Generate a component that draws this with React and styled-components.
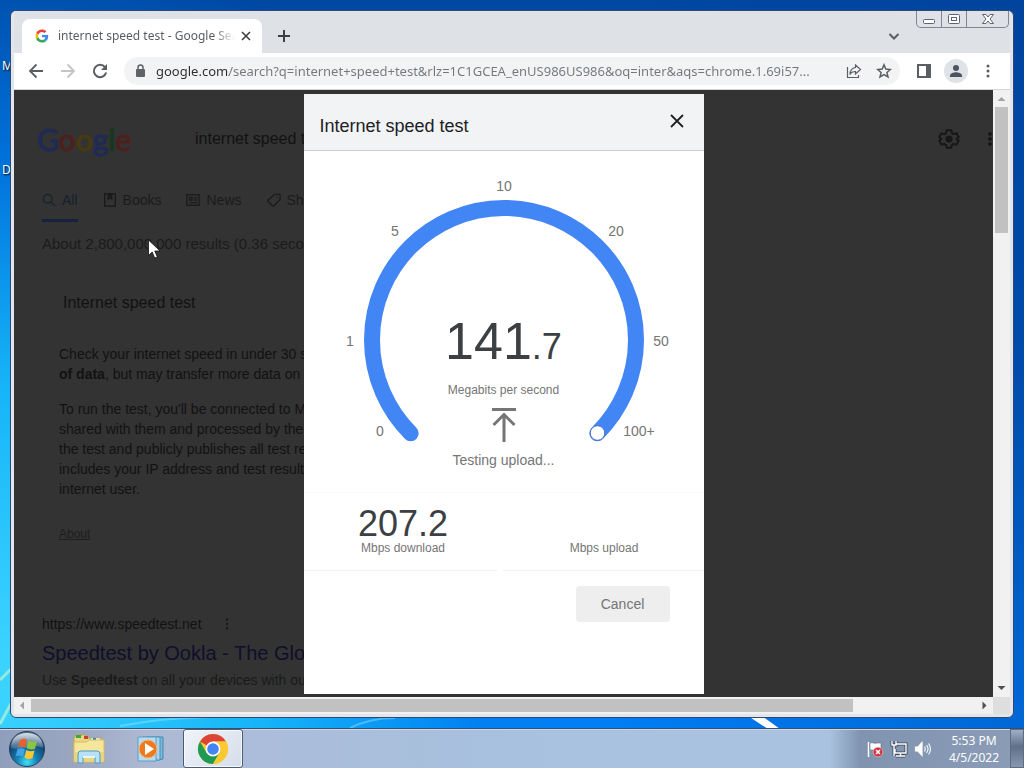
import React from "react";
import styled, { createGlobalStyle } from "styled-components";

const ui = `"Noto Sans", "Open Sans", sans-serif`;
const arial = `"Liberation Sans", Arial, sans-serif`;

const GlobalStyle = createGlobalStyle`
  * { box-sizing: border-box; }
  body { margin: 0; }
  button, input { font: inherit; color: inherit; border: 0; padding: 0; margin: 0; background: none; outline: none; }
  svg { display: block; flex: none; }
  h1, h2, p { margin: 0; font-weight: 400; }
`;

/* ---------- desktop ---------- */

const Desktop = styled.div`
  position: relative;
  display: flex;
  flex-direction: column;
  height: 100vh;
  min-height: 600px;
  overflow: hidden;
  font-family: ${ui};
  background:
    radial-gradient(ellipse 70% 95% at -2% 88%, #3fd6ff 0%, #16b4f8 40%, rgba(0, 130, 240, 0.7) 70%, rgba(0, 80, 180, 0) 100%),
    linear-gradient(90deg, rgba(0, 130, 255, 0) 55%, rgba(0, 60, 150, 0.35) 100%),
    linear-gradient(#0048a2 0%, #0052b4 45%, #0084ff 100%);
`;

const Rays = styled.svg`
  position: absolute;
  inset: 0;
  width: 100%;
  height: 100%;
`;

const DesktopLabel = styled.span`
  position: absolute;
  left: 2px;
  top: ${(p) => p.$top}px;
  font-size: 12px;
  line-height: 16px;
  color: #fff;
  text-shadow: 1px 1px 2px #000;
`;

const Workspace = styled.main`
  position: relative;
  flex: 1;
  min-height: 0;
  display: flex;
  padding: 10px;
`;

const Window = styled.section`
  position: relative;
  flex: 1;
  min-width: 0;
  display: flex;
  flex-direction: column;
  padding: 0 3px 3px;
  border: 1px solid #2c4a78;
  border-radius: 6px;
  background: #e3e5ea;
  overflow: hidden;
`;

/* ---------- browser chrome ---------- */

const TabStrip = styled.header`
  display: flex;
  align-items: flex-end;
  height: 42px;
  padding-left: 8px;
  background: #dee1e6;
`;

const Tab = styled.div`
  display: flex;
  align-items: center;
  width: 240px;
  height: 34px;
  padding: 0 9px 0 13px;
  border-radius: 8px 8px 0 0;
  background: #fff;
`;

const TabTitle = styled.span`
  flex: 1;
  min-width: 0;
  margin: 0 4px 0 9px;
  overflow: hidden;
  white-space: nowrap;
  font-size: 12px;
  line-height: 18px;
  color: #5a5e62;
  mask-image: linear-gradient(90deg, #000 88%, transparent 100%);
`;

const IconButton = styled.button`
  display: flex;
  align-items: center;
  justify-content: center;
  flex: none;
  width: ${(p) => p.$size || 24}px;
  height: ${(p) => p.$size || 24}px;
  color: ${(p) => p.$color || "#5a5e63"};
  border-radius: 50%;
  background: ${(p) => p.$fill || "transparent"};
`;

const NewTab = styled(IconButton)`
  margin: 0 auto 5px 10px;
`;

const TabSearch = styled(IconButton)`
  margin: 0 10px 5px 0;
`;

const WindowControls = styled.div`
  display: flex;
  align-self: flex-start;
  height: 17px;
  margin-right: 1px;
  border: 1px solid #7d8795;
  border-top: 0;
  border-radius: 0 0 5px 5px;
`;

const ControlButton = styled.button`
  display: flex;
  align-items: center;
  justify-content: center;
  width: ${(p) => p.$width}px;
  height: 16px;
  & + & { border-left: 1px solid #7d8795; }
`;

const Toolbar = styled.div`
  display: flex;
  align-items: center;
  gap: 8px;
  height: 37px;
  padding: 0 10px;
  background: #fff;
  border-bottom: 1px solid #d5d5d5;
`;

const Omnibox = styled.label`
  flex: 1;
  min-width: 0;
  display: flex;
  align-items: center;
  gap: 10px;
  height: 28px;
  margin: 0 4px;
  padding: 0 6px 0 10px;
  border-radius: 14px;
  background: #f1f3f4;
`;

const UrlInput = styled.input`
  flex: 1;
  min-width: 0;
  height: 24px;
  font-size: 13px;
  line-height: 24px;
  background: linear-gradient(90deg, #2b2e31 73px, #74787c 73px);
  background-clip: text;
  color: transparent;
`;

/* ---------- page and scroll bars ---------- */

const View = styled.div`
  flex: 1;
  min-height: 0;
  display: grid;
  grid-template-columns: minmax(0, 1fr) 17px;
  grid-template-rows: minmax(0, 1fr) 17px;
  background: #dedede;
`;

const Page = styled.div`
  position: relative;
  overflow: hidden;
  background: #333;
  color: #121212;
  font-family: ${arial};
  font-size: 14px;
  line-height: 20px;
  white-space: nowrap;
`;

const ScrollBar = styled.div`
  display: flex;
  flex-direction: ${(p) => (p.$vertical ? "column" : "row")};
  align-items: center;
  background: #f1f1f1;
`;

const ScrollTrack = styled.div`
  flex: 1;
  align-self: stretch;
  padding: ${(p) => (p.$vertical ? "0 2px" : "2px 0")};
`;

const ScrollThumb = styled.div`
  background: #c1c1c1;
  width: ${(p) => (p.$vertical ? "100%" : "87%")};
  height: ${(p) => (p.$vertical ? "22%" : "100%")};
`;

const SearchHeader = styled.div`
  display: flex;
  align-items: center;
  height: 60px;
  margin-top: 19px;
  padding-left: 23px;
`;

const Logo = styled.div`
  width: 158px;
  font-family: Lato, sans-serif;
  font-size: 30px;
  line-height: 40px;
  -webkit-text-stroke: 1px currentColor;
  span:nth-child(1), span:nth-child(4) { color: #1f2a55; }
  span:nth-child(2), span:nth-child(6) { color: #4e201d; }
  span:nth-child(3) { color: #473a12; }
  span:nth-child(5) { color: #17371f; }
`;

const Query = styled.input`
  flex: 1;
  min-width: 0;
  font-size: 16px;
  line-height: 24px;
`;

const Gear = styled.div`
  margin-right: 27px;
`;

const Nav = styled.nav`
  display: flex;
  gap: 25px;
  height: 33px;
  margin-top: 20px;
  padding-left: 28px;
`;

const NavItem = styled.a`
  display: flex;
  align-items: center;
  gap: 6px;
  padding-bottom: 9px;
  color: ${(p) => (p.$active ? "#16202f" : "#1b1b1b")};
  text-decoration: none;
  border-bottom: 3px solid ${(p) => (p.$active ? "#15233f" : "transparent")};
`;

const ResultCount = styled.p`
  margin-top: 12px;
  padding-left: 28px;
  font-size: 15px;
  color: #1b1b1b;
`;

const Card = styled.article`
  display: flex;
  flex-direction: column;
  gap: 15px;
  margin-top: 39px;
  padding-left: 45px;
`;

const CardTitle = styled.h2`
  margin-bottom: 16px;
  padding-left: 4px;
  font-size: 16px;
  line-height: 20px;
`;

const AboutLink = styled.a`
  margin-top: 10px;
  font-size: 12px;
  color: #1e1e1e;
`;

const Result = styled.article`
  display: flex;
  flex-direction: column;
  margin-top: 70px;
  padding-left: 28px;
`;

const ResultSite = styled.div`
  display: flex;
  align-items: center;
  gap: 22px;
`;

const ResultTitle = styled.a`
  font-size: 20px;
  line-height: 38px;
  color: #0f0f2c;
  text-decoration: none;
`;

const ResultText = styled.p`
  line-height: 16px;
  color: #1a1a1a;
`;

/* ---------- speed test dialog ---------- */

const Overlay = styled.div`
  position: absolute;
  inset: 0;
  display: flex;
  justify-content: center;
  padding: 4px 0 3px;
`;

const Dialog = styled.section`
  display: flex;
  flex-direction: column;
  width: 400px;
  background: #fff;
  color: #757575;
`;

const DialogHeader = styled.header`
  display: flex;
  align-items: center;
  justify-content: space-between;
  height: 57px;
  padding: 8px 15px 0 16px;
  border-bottom: 1px solid #c9cbcd;
  background: #f1f3f4;
`;

const DialogTitle = styled.h1`
  font-size: 18px;
  line-height: 24px;
  color: #202124;
`;

const CloseButton = styled(IconButton)`
  margin-bottom: 10px;
`;

const GaugeArea = styled.div`
  display: grid;
  height: 341px;
  & > * { grid-area: 1 / 1; }
`;

const Gauge = styled.svg`
  text {
    font-size: 14px;
    text-anchor: middle;
    fill: #757575;
  }
`;

const Readout = styled.div`
  display: flex;
  flex-direction: column;
  align-items: center;
  padding-top: 160px;
`;

const Speed = styled.p`
  font-size: 52px;
  line-height: 60px;
  color: #3c4043;
  small { font-size: 36px; }
`;

const Unit = styled.p`
  margin: 3px 0 8px;
  font-size: 12px;
`;

const Status = styled.p`
  margin-top: 8px;
`;

const Totals = styled.div`
  display: grid;
  grid-template-columns: 193px 1fr;
  gap: 6px;
  border-top: 1px solid #fafafa;
`;

const Total = styled.div`
  display: flex;
  flex-direction: column;
  align-items: center;
  justify-content: flex-end;
  height: 78px;
  padding: 0 0 14px ${(p) => p.$inset}px;
  border-bottom: 1px solid #f1f3f4;
`;

const TotalValue = styled.span`
  font-size: 36px;
  line-height: 32px;
  color: #3c4043;
`;

const TotalLabel = styled.span`
  font-size: 12px;
  line-height: 16px;
`;

const CancelButton = styled.button`
  align-self: flex-end;
  width: 94px;
  height: 36px;
  margin: 15px 34px;
  border-radius: 4px;
  background: #eee;
`;

const Cursor = styled.svg`
  position: absolute;
  left: 134px;
  top: 149px;
`;

/* ---------- taskbar ---------- */

const Taskbar = styled.footer`
  position: relative;
  display: flex;
  align-items: stretch;
  height: 40px;
  border-top: 1px solid #38506f;
  box-shadow: inset 0 1px #c9d8ea;
  background: linear-gradient(90deg, #8f9fbb 0, #9aa6c0 7%, #adb9d2 14%, #abbdda 25%, #a7c1de 50%, #a9c2df 81%, #8094b0 84%, #8b9cb6 100%);
`;

const StartButton = styled.button`
  margin: 0 14px 0 9px;
`;

const TaskButton = styled.button`
  display: flex;
  align-items: center;
  justify-content: center;
  width: 60px;
  margin-right: 2px;
  border-radius: 3px;
  border: 1px solid ${(p) => (p.$active ? "#4a5d78" : "transparent")};
  box-shadow: ${(p) => (p.$active ? "inset 0 0 0 1px #f8fafc" : "none")};
  background: ${(p) => (p.$active ? "linear-gradient(135deg, #f0f4f9, #d5dde9)" : "none")};
`;

const Tray = styled.div`
  display: flex;
  align-items: center;
  gap: 6px;
  margin-left: auto;
`;

const Clock = styled.time`
  width: 54px;
  margin: 0 3px 0 9px;
  font-size: 12px;
  line-height: 17px;
  text-align: center;
  color: #fff;
  white-space: nowrap;
`;

const ShowDesktop = styled.button`
  align-self: stretch;
  width: 14px;
  border: 1px solid #5b6c86;
  background: linear-gradient(#9fb0c6, #5f7189 45%, #8797ae);
`;

/* ---------- icons ---------- */

const GoogleG = () => (
  <svg width="14" height="14" viewBox="-2 -2 52 52">
    <path fill="#EA4335" d="M24 9.5c3.5 0 6.7 1.2 9.2 3.6l6.900-6.900C35.900 2.400 30.500 0 24 0 14.600 0 6.500 5.400 2.600 13.200l8 6.200C12.400 13.700 17.700 9.500 24 9.500z" />
    <path fill="#4285F4" d="M47 24.600c0-1.600-.2-3.100-.4-4.600H24v9h12.900c-.6 3-2.300 5.500-4.800 7.200l7.700 6C44.400 38 47 31.800 47 24.600z" />
    <path fill="#FBBC05" d="M10.500 28.600c-.5-1.500-.8-3-.8-4.600s.3-3.100.8-4.600l-8-6.200C.9 16.500 0 20.100 0 24s.9 7.500 2.600 10.800z" />
    <path fill="#34A853" d="M24 48c6.500 0 11.900-2.100 15.800-5.800l-7.700-6c-2.100 1.400-4.900 2.300-8.100 2.300-6.300 0-11.600-4.200-13.500-9.900l-8 6.200C6.500 42.600 14.600 48 24 48z" />
  </svg>
);

const Stroke = ({ size = 16, w = 2, d, box = 16, children }) => (
  <svg width={size} height={size} viewBox={`0 0 ${box} ${box}`} fill="none" stroke="currentColor" strokeWidth={w}>
    {d && <path d={d} />}
    {children}
  </svg>
);

const Dots = ({ r = 1.5, h = 16 }) => (
  <svg width="6" height={h} viewBox="0 0 6 16" fill="currentColor">
    <circle cx="3" cy="3" r={r} />
    <circle cx="3" cy="8" r={r} />
    <circle cx="3" cy="13" r={r} />
  </svg>
);

const Arrow = ({ d, color }) => (
  <svg width="17" height="17" viewBox="0 0 17 17" fill={color}>
    <path d={d} />
  </svg>
);

const StartOrb = () => (
  <svg width="36" height="38" viewBox="0 0 36 38">
    <defs>
      <radialGradient id="orb" cx="50%" cy="88%" r="82%">
        <stop offset="0" stopColor="#3fe0f5" />
        <stop offset=".35" stopColor="#1583b5" />
        <stop offset=".75" stopColor="#134572" />
        <stop offset="1" stopColor="#5b7894" />
      </radialGradient>
      <linearGradient id="gloss" x1="0" y1="0" x2="0" y2="1">
        <stop offset="0" stopColor="#fff" stopOpacity=".75" />
        <stop offset="1" stopColor="#fff" stopOpacity=".15" />
      </linearGradient>
    </defs>
    <circle cx="18" cy="19" r="17.5" fill="url(#orb)" stroke="#24405f" />
    <path d="M2 18C2 8 9 3 18 3s16 5 16 15c-9-5-22 3-32 0z" fill="url(#gloss)" />
    <path d="M11 10c3-1.800 5-1.600 7-.3l-1.800 8c-2.400-1.400-4.600-1.400-7.200-.3z" fill="#e8602c" />
    <path d="M19.300 10.500c3 1.500 5.500 1.500 8.700.2l-2 8c-3 1.200-5.500 1-8.300-.6z" fill="#8cc63f" />
    <path d="M8.500 19c2.600-1.200 5-1 7.300.3L14 26.500c-2.300-1.300-4.700-1.300-7.200-.2z" fill="#41a4e8" />
    <path d="M17.200 20c2.800 1.500 5.400 1.600 8.300.5l-2 7.800c-3 1.200-5.400.8-8.100-.8z" fill="#fdc82f" />
  </svg>
);

const Explorer = () => (
  <svg width="34" height="32" viewBox="0 0 34 32">
    <path d="M2 5l2-3h9l2 3h14l2 2v21H2z" fill="#ead882" stroke="#bfa244" />
    <path d="M4 2h5v3H4z" fill="#3aa648" />
    <path d="M12 3h4v3h-4z" fill="#c4452f" />
    <path d="M19 5h9v3h-9z" fill="#f7fafc" stroke="#8ba6bd" strokeWidth=".5" />
    <path d="M21 5h3v2h-3z" fill="#3f7fc0" />
    <path d="M2 9h12l3-2h15v22H2z" fill="#f5e69c" stroke="#d5bc62" />
    <path d="M3 19h28v9H3z" fill="#ead67c" />
    <path d="M6 30V21q0-3 3-3h16q3 0 3 3v9h-5v-6H11v6z" fill="#b9e1f5" stroke="#4a9bc8" />
    <path d="M11 23h12v2H11z" fill="#e5f5fd" />
  </svg>
);

const MediaPlayer = () => (
  <svg width="30" height="28" viewBox="0 0 30 28">
    <path d="M10 2h17v22l-10 2z" fill="#79b6da" stroke="#4588b2" />
    <path d="M7 2h17v23H7z" fill="#a8d3ea" stroke="#4d92bd" />
    <path d="M2 2h18v24H2z" fill="#b7dcf0" stroke="#5b9fc6" />
    <circle cx="12" cy="14" r="9" fill="#ee7a1f" stroke="#f6b57a" />
    <path d="M9 8l9 6-9 6z" fill="#fff" />
  </svg>
);

const Chrome = () => (
  <svg width="32" height="32" viewBox="0 0 32 32">
    <circle cx="16" cy="16" r="15" fill="#fcc934" />
    <path d="M16 16L3 8.500A15 15 0 0 1 29 8.500H16z" fill="#db4437" />
    <path d="M3 8.500A15 15 0 0 0 16 31l6.500-11.200L16 16 9.500 19.800z" fill="#1e9a52" />
    <path d="M29 8.500A15 15 0 0 1 16 31l6.500-11.300L16 8.500z" fill="#fcc934" />
    <circle cx="16" cy="16" r="7.400" fill="#fff" />
    <circle cx="16" cy="16" r="5.800" fill="#4285f4" />
  </svg>
);

const ticks = [
  ["0", 76, 285], ["1", 46, 195], ["5", 91, 85], ["10", 200, 40],
  ["20", 312, 85], ["50", 357, 195], ["100+", 335, 285],
];

export default function App() {
  return (
    <Desktop>
      <GlobalStyle />
      <Rays viewBox="0 0 1024 768" preserveAspectRatio="none" fill="none">
        <path d="M748 716h14l18 13h-12z" fill="#fff" />
        <path d="M0 680l12-12M0 724l14-26" stroke="#b8f3d8" strokeWidth="3" opacity=".7" />
        <path d="M350 728q20-10 45-10M120 726q40-8 90-9" stroke="#a9ecff" strokeWidth="2" opacity=".4" />
      </Rays>
      <DesktopLabel $top={58}>M</DesktopLabel>
      <DesktopLabel $top={162}>D</DesktopLabel>

      <Workspace>
        <Window>
          <TabStrip>
            <Tab>
              <GoogleG />
              <TabTitle>internet speed test - Google Sear</TabTitle>
              <IconButton $size={14} aria-label="Close tab" $color="#3c4043">
                <Stroke size={10} box={10} w={1.6} d="M1 1l8 8M9 1l-8 8" />
              </IconButton>
            </Tab>
            <NewTab aria-label="New tab" $color="#3c4043">
              <Stroke size={12} box={12} d="M6 0v12M0 6h12" />
            </NewTab>
            <TabSearch aria-label="Search tabs">
              <Stroke size={12} box={12} d="M1.500 4L6 8.500 10.500 4" />
            </TabSearch>
            <WindowControls>
              <ControlButton $width={24} aria-label="Minimize">
                <Stroke size={14} box={14} w={1}><rect x="1.500" y="7.500" width="11" height="4" rx="1" fill="#fff" stroke="#5b6470" /></Stroke>
              </ControlButton>
              <ControlButton $width={25} aria-label="Restore">
                <Stroke size={14} box={14} w={1}>
                  <rect x="1.500" y="2.500" width="11" height="9" rx="1" fill="#fff" stroke="#5b6470" />
                  <rect x="4.500" y="5.500" width="5" height="3" stroke="#5b6470" />
                </Stroke>
              </ControlButton>
              <ControlButton $width={42} aria-label="Close">
                <Stroke size={14} box={14} w={1}>
                  <path d="M1.500 2.500h3.500L7 5l2-2.500h3.500L9 7l3.500 4.500H9L7 9l-2 2.500H1.500L5 7z" fill="#fff" stroke="#5b6470" />
                </Stroke>
              </ControlButton>
            </WindowControls>
          </TabStrip>

          <Toolbar>
            <IconButton aria-label="Back"><Stroke w={1.8} d="M15 8H2M8.500 1.500L2 8l6.500 6.500" /></IconButton>
            <IconButton aria-label="Forward" $color="#c2c4c7"><Stroke w={1.8} d="M1 8h13M7.500 1.500L14 8l-6.500 6.500" /></IconButton>
            <IconButton aria-label="Reload">
              <Stroke>
                <path d="M13 4.200A6.200 6.200 0 1 0 14.100 9.500" />
                <path d="M15 1v6H9z" fill="currentColor" stroke="none" />
              </Stroke>
            </IconButton>
            <Omnibox>
              <svg width="12" height="14" viewBox="0 0 12 14" fill="none">
                <rect x="2" y="5" width="9" height="8" rx="1" fill="#5f6368" />
                <path d="M4 6V3.500a2.500 2.500 0 0 1 5 0V6" stroke="#5f6368" strokeWidth="1.500" />
              </svg>
              <UrlInput
                aria-label="Address"
                defaultValue="google.com/search?q=internet+speed+test&rlz=1C1GCEA_enUS986US986&oq=inter&aqs=chrome.1.69i57..."
              />
              <IconButton $size={20} aria-label="Share">
                <Stroke w={1.2}>
                  <path d="M1.500 4v10.500h11V12" />
                  <path d="M9.500 2l5 4.500-5 4.500V8.500C7 8.500 5 9.500 4 11.500c0-4 2.500-6.500 5.500-7z" />
                </Stroke>
              </IconButton>
              <IconButton $size={20} aria-label="Bookmark">
                <Stroke w={1.500} d="M8 1.800l1.800 4.300 4.600.4-3.500 3 1.100 4.500L8 11.600 4 14l1.100-4.500-3.500-3 4.600-.4z" />
              </IconButton>
            </Omnibox>
            <IconButton aria-label="Side panel">
              <Stroke><rect x="2" y="2" width="12" height="12" /><path d="M10 2h4v12h-4z" fill="currentColor" stroke="none" /></Stroke>
            </IconButton>
            <IconButton aria-label="Profile" $size={24} $fill="#dfe2e7">
              <svg width="14" height="14" viewBox="0 0 14 14" fill="#4b5461">
                <circle cx="7" cy="4" r="3" />
                <path d="M1 13v-1.500C1 9 5 8.200 7 8.200s6 .8 6 3.300V13z" />
              </svg>
            </IconButton>
            <IconButton aria-label="Menu"><Dots /></IconButton>
          </Toolbar>

          <View>
            <Page>
              <SearchHeader>
                <Logo aria-label="Google">
                  <span>G</span><span>o</span><span>o</span><span>g</span><span>l</span><span>e</span>
                </Logo>
                <Query aria-label="Search" defaultValue="internet speed t" />
                <Gear>
                  <svg width="22" height="22" viewBox="0 0 24 24" fill="none" stroke="#171717" strokeWidth="2.200">
                    <path d="M9.500 2.500h5l.7 3 2 1.200 3-1 2.400 4.300-2.300 2 2.300 2-2.400 4.300-3-1-2 1.200-.7 3h-5l-.7-3-2-1.200-3 1L1.400 14l2.300-2-2.300-2 2.400-4.300 3 1 2-1.200z" strokeLinejoin="round" />
                    <circle cx="12" cy="12" r="2.800" fill="#171717" />
                  </svg>
                </Gear>
                <Dots r={1.8} h={18} />
              </SearchHeader>

              <Nav>
                <NavItem href="#all" $active>
                  <Stroke size={14} w={1.3}><circle cx="6.500" cy="6.500" r="5" /><path d="M10 10l5 5" /></Stroke>
                  All
                </NavItem>
                <NavItem href="#books">
                  <Stroke size={14} w={1.600}><rect x="2" y="1" width="12" height="14" /><path d="M6 1h4v6L8 5.500 6 7z" fill="currentColor" /></Stroke>
                  Books
                </NavItem>
                <NavItem href="#news">
                  <Stroke size={14} w={1.500}><rect x="1" y="2" width="14" height="12" /><path d="M4 5h3v3H4zM9 5.500h4M9 8h4M4 11h9" /></Stroke>
                  News
                </NavItem>
                <NavItem href="#shopping">
                  <Stroke size={14} w={1.500} d="M8.500 1.500H14a1 1 0 0 1 1 1v4.500L8 14.500a1.500 1.500 0 0 1-2 0L1.500 10a1.500 1.500 0 0 1 0-2zM11.500 4v1.500" />
                  Sho
                </NavItem>
              </Nav>
              <ResultCount>About 2,800,000,000 results (0.36 secon</ResultCount>

              <Card>
                <CardTitle>Internet speed test</CardTitle>
                <p>Check your internet speed in under 30 s<br /><b>of data</b>, but may transfer more data on f</p>
                <p>
                  To run the test, you'll be connected to M<br />
                  shared with them and processed by the<br />
                  the test and publicly publishes all test re<br />
                  includes your IP address and test result<br />
                  internet user.
                </p>
                <AboutLink href="#about">About</AboutLink>
              </Card>

              <Result>
                <ResultSite>https://www.speedtest.net <Dots r={1.2} h={14} /></ResultSite>
                <ResultTitle href="#speedtest">Speedtest by Ookla - The Glo</ResultTitle>
                <ResultText>Use <b>Speedtest</b> on all your devices with ou</ResultText>
              </Result>

              <Overlay>
                <Dialog role="dialog" aria-labelledby="speed-title">
                  <DialogHeader>
                    <DialogTitle id="speed-title">Internet speed test</DialogTitle>
                    <CloseButton aria-label="Close dialog" $color="#202124">
                      <Stroke size={14} box={14} w={1.800} d="M1 1l12 12M13 1L1 13" />
                    </CloseButton>
                  </DialogHeader>
                  <GaugeArea>
                    <Gauge width="400" height="341" viewBox="0 0 400 341">
                      <path d="M106.700 282.300A132 132 0 1 1 293.300 282.300" fill="none" stroke="#4285f4" strokeWidth="16" strokeLinecap="round" />
                      <circle cx="293.500" cy="282" r="7.300" fill="#fff" stroke="#4a6fc4" />
                      {ticks.map(([t, x, y]) => <text key={t} x={x} y={y}>{t}</text>)}
                    </Gauge>
                    <Readout>
                      <Speed>141<small>.7</small></Speed>
                      <Unit>Megabits per second</Unit>
                      <svg width="24" height="34" viewBox="0 0 24 34" fill="none" stroke="#757575" strokeWidth="3">
                        <path d="M0 1.500h24M12 34V7M1.500 17L12 6.500 22.500 17" />
                      </svg>
                      <Status>Testing upload...</Status>
                    </Readout>
                  </GaugeArea>
                  <Totals>
                    <Total $inset={6}><TotalValue>207.2</TotalValue><TotalLabel>Mbps download</TotalLabel></Total>
                    <Total $inset={2}><TotalLabel>Mbps upload</TotalLabel></Total>
                  </Totals>
                  <CancelButton>Cancel</CancelButton>
                </Dialog>
              </Overlay>

              <Cursor width="13" height="20" viewBox="0 0 13 20">
                <path d="M.5 1v15.500l3.700-3.500 2.500 6 2.600-1.100-2.500-5.900H12z" fill="#fff" stroke="#111" strokeWidth=".8" />
              </Cursor>
            </Page>

            <ScrollBar $vertical>
              <Arrow color="#a3a3a3" d="M4.500 11l4-4 4 4z" />
              <ScrollTrack $vertical><ScrollThumb $vertical /></ScrollTrack>
              <Arrow color="#505050" d="M4.500 6l4 4 4-4z" />
            </ScrollBar>
            <ScrollBar>
              <Arrow color="#a3a3a3" d="M10 4.500l-4 4 4 4z" />
              <ScrollTrack><ScrollThumb /></ScrollTrack>
              <Arrow color="#505050" d="M6.500 4.500l4 4-4 4z" />
            </ScrollBar>
          </View>
        </Window>
      </Workspace>

      <Taskbar>
        <StartButton aria-label="Start"><StartOrb /></StartButton>
        <TaskButton aria-label="Explorer"><Explorer /></TaskButton>
        <TaskButton aria-label="Media Player"><MediaPlayer /></TaskButton>
        <TaskButton aria-label="Chrome" $active><Chrome /></TaskButton>
        <Tray>
          <svg width="18" height="18" viewBox="0 0 18 18" fill="none">
            <path d="M2.500 2v15" stroke="#fff" strokeWidth="1.500" />
            <path d="M4 3c3-1 4 1 7 0h4v7H4z" fill="#fff" stroke="#5d6c84" strokeWidth=".6" />
            <circle cx="12" cy="12" r="4.800" fill="#d2303a" stroke="#f1c7ca" strokeWidth=".6" />
            <path d="M10 10l4 4M14 10l-4 4" stroke="#fff" strokeWidth="1.600" />
          </svg>
          <svg width="18" height="18" viewBox="0 0 18 18" fill="none">
            <path d="M6 4h10v9H5V9M10.500 13v3M6 16h9M2 1v4h4V1M4 5v11" stroke="#3b485c" strokeWidth="3" />
            <path d="M6 4h10v9H5V9M10.500 13v3M6 16h9M2 1v4h4V1M4 5v11" stroke="#fff" strokeWidth="1.400" />
          </svg>
          <svg width="18" height="18" viewBox="0 0 18 18" fill="none" stroke="#fff" strokeWidth="1.200">
            <path d="M1.500 7H4l4-4.500v13L4 11H1.500z" fill="#fff" />
            <path d="M10.500 6.500q1.500 2.500 0 5M12.500 5q3 4 0 8M14.500 3.500q4 5.500 0 11" opacity=".9" />
          </svg>
          <Clock>5:53 PM<br />4/5/2022</Clock>
          <ShowDesktop aria-label="Show desktop" />
        </Tray>
      </Taskbar>
    </Desktop>
  );
}
